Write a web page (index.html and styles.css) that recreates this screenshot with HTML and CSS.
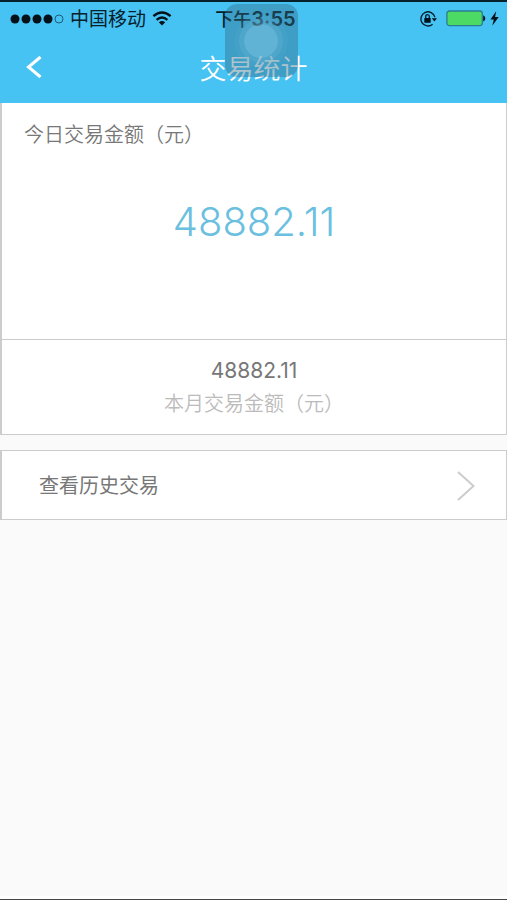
FILE: index.html
```html
<!DOCTYPE html>
<html lang="zh-CN">
<head>
<meta charset="utf-8">
<meta name="viewport" content="width=device-width, initial-scale=1">
<title>交易统计</title>
<link rel="stylesheet" href="styles.css">
</head>
<body>
<header class="top">
  <div class="status">
    <div class="status-left">
      <svg class="signal" viewBox="0 0 54 12" width="54" height="12" aria-hidden="true">
        <circle cx="5" cy="6" r="4.5"/><circle cx="16" cy="6" r="4.5"/><circle cx="27" cy="6" r="4.5"/><circle cx="38" cy="6" r="4.5"/>
        <circle class="empty" cx="49" cy="6" r="4"/>
      </svg>
      <span class="carrier">中国移动</span>
      <svg class="wifi" viewBox="0 0 20 16" width="20" height="16" aria-hidden="true">
        <path class="arc" d="M1.400 5.200Q10-2.200 18.600 5.200M4.600 8.800Q10 4.200 15.400 8.800"/>
        <path d="M6.800 11.200Q10 8.700 13.200 11.200L10 14.600Z"/>
      </svg>
    </div>
    <span class="time">下午<b>3:55</b></span>
    <div class="status-right">
      <svg viewBox="0 0 18 18" width="18" height="18" aria-hidden="true">
        <path class="lock-ring" d="M13.600 14.300A7.100 7.100 0 1 1 15.900 7.200"/>
        <path d="M12.800 8.200H18L15.400 11.400Z"/>
        <rect x="5.300" y="8" width="6.400" height="4.700" rx=".5"/>
        <path class="shackle" d="M6.700 8.200V6.400a1.800 1.800 0 0 1 3.600 0v1.800"/>
      </svg>
      <svg class="battery" viewBox="0 0 40 17" width="40" height="17" aria-hidden="true">
        <rect class="cell" x=".9" y="1" width="35.400" height="14.600" rx="2.500"/>
        <path d="M37.200 5.600h.6q1.400 1 1.400 2.800t-1.400 2.800h-.6Z"/>
      </svg>
      <svg class="bolt" viewBox="0 0 9 15" width="9" height="15" aria-hidden="true">
        <path d="M6.200.3.4 8.500h3.400L2.300 14.700 8.700 6.100H5.100Z"/>
      </svg>
    </div>
  </div>
  <nav class="nav">
    <button class="back" type="button" aria-label="返回">
      <svg viewBox="0 0 18 24" width="18" height="24" aria-hidden="true"><path d="M15.500 2 3.500 12l12 10"/></svg>
    </button>
    <h1>交易统计</h1>
  </nav>
  <div class="assist" aria-hidden="true"><i></i></div>
</header>
<main>
  <section class="card today">
    <h2>今日交易金额（元）</h2>
    <p class="amount">48882.11</p>
  </section>
  <section class="card month">
    <p class="sum">48882.11</p>
    <p class="caption">本月交易金额（元）</p>
  </section>
  <a class="card history" href="#history">
    <span>查看历史交易</span>
    <svg viewBox="0 0 18 32" width="18" height="32" aria-hidden="true"><path d="M1 2l15.500 14L1 30"/></svg>
  </a>
</main>
</body>
</html>
```
FILE: styles.css
```css
* { box-sizing: border-box; margin: 0; padding: 0; }
body {
  display: flex;
  flex-direction: column;
  min-height: 100vh;
  background: #fafafa;
  border-bottom: 1px solid #444;
  font-family: Inter, "Noto Sans CJK SC", sans-serif;
  color: #777;
}
.top {
  position: relative;
  background: #46c2f3;
  border-top: 2px solid #06202c;
}
.status {
  display: grid;
  grid-template-columns: 1fr auto 1fr;
  align-items: center;
  height: 32px;
  padding: 0 8px 0 12px;
  color: #06202c;
  fill: #041118;
}
.status-left, .status-right { display: flex; align-items: center; }
.status-right { justify-content: flex-end; }
.signal { margin-left: -2px; }
.carrier { margin: 0 6px; padding-top: 2px; font-size: 19px; line-height: 30px; }
.time { padding-top: 2px; font-size: 18px; line-height: 30px; font-weight: 500; }
.time b { font-weight: 600; font-size: 20px; }
.empty { fill: none; stroke: #1b5f7c; }
.arc { fill: none; stroke: #041118; stroke-width: 2.4; }
.lock-ring, .shackle { fill: none; stroke: #06202c; stroke-width: 1.4; }
.battery { margin: 0 4px 0 9px; }
.cell { fill: #4cd964; stroke: #2a7f92; stroke-width: 1.3; }
.nav {
  display: grid;
  grid-template-columns: 1fr auto 1fr;
  align-items: center;
  height: 69px;
}
.back {
  display: flex;
  justify-self: start;
  padding: 6px 25px 10px;
  background: none;
  border: 0;
}
.back path { fill: none; stroke: #fff; stroke-width: 3; }
h1 { padding-top: 3px; font-size: 27px; line-height: 40px; font-weight: 350; color: #fff; }
.assist {
  position: absolute;
  top: 2px;
  left: calc(50% - 29px);
  display: grid;
  place-items: center;
  width: 73px;
  height: 73px;
  border-radius: 12px;
  background: rgba(50, 105, 130, .4);
}
.assist i {
  width: 34px;
  height: 34px;
  border-radius: 50%;
  background: rgba(140, 205, 230, .45);
  box-shadow: 0 0 0 5px rgba(110, 185, 215, .25), 0 0 0 10px rgba(100, 175, 205, .15);
}
main { flex: 1; border-bottom: 3px solid #fff; }
.card {
  background: #fff;
  border: 1px solid #ccc;
  border-left-width: 2px;
}
.today { height: 237px; padding: 17px 22px; border-top: 0; }
h2 { font-size: 20px; line-height: 30px; font-weight: 350; }
.amount {
  margin-top: 47px;
  font-size: 40px;
  line-height: 50px;
  font-weight: 300;
  text-align: center;
  color: #6bbfdf;
}
.month {
  margin-top: -1px;
  padding: 16px 0 14px;
  text-align: center;
}
.sum { font-size: 21px; line-height: 30px; }
.caption { padding-top: 2px; font-size: 20px; line-height: 32px; font-weight: 350; color: #bbb; }
.history {
  display: flex;
  align-items: center;
  justify-content: space-between;
  height: 70px;
  margin-top: 15px;
  padding: 2px 31px 0 37px;
  font-size: 20px;
  line-height: 30px;
  color: #777;
  text-decoration: none;
}
.history path { fill: none; stroke: #ccc; stroke-width: 2; }
```
